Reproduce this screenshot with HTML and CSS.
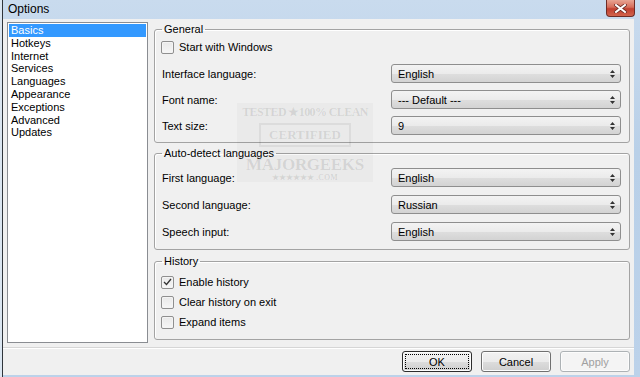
FILE: index.html
```html
<!DOCTYPE html>
<html lang="en">
<head>
  <meta charset="UTF-8">
  <title>Options</title>
  <link rel="stylesheet" href="styles.css">
</head>
<body>
  <div class="window">
    <div class="titlebar">
      <span class="title">Options</span>
      <span class="close" title="Close">
        <svg width="13" height="9" viewBox="0 0 13 9">
          <path d="M2 1 L11 8 M11 1 L2 8" stroke="#6b2a24" stroke-width="3.6" stroke-linecap="square"/>
          <path d="M2 1 L11 8 M11 1 L2 8" stroke="#ffffff" stroke-width="2" stroke-linecap="square"/>
        </svg>
      </span>
    </div>

    <div class="client">
      <div class="main">
        <ul class="pages">
          <li class="selected">Basics</li>
          <li>Hotkeys</li>
          <li>Internet</li>
          <li>Services</li>
          <li>Languages</li>
          <li>Appearance</li>
          <li>Exceptions</li>
          <li>Advanced</li>
          <li>Updates</li>
        </ul>

        <div class="panel">
          <fieldset class="group general">
            <legend>General</legend>
            <label class="check first"><span class="box"></span>Start with Windows</label>
            <div class="rows">
              <span>Interface language:</span>
              <div class="select"><span>English</span><svg class="spin" width="5" height="8" viewBox="0 0 5 8"><path d="M2.5 0 L5 3 H0 Z M0 5 H5 L2.5 8 Z" fill="#333"/></svg></div>
              <span>Font name:</span>
              <div class="select"><span>--- Default ---</span><svg class="spin" width="5" height="8" viewBox="0 0 5 8"><path d="M2.5 0 L5 3 H0 Z M0 5 H5 L2.5 8 Z" fill="#333"/></svg></div>
              <span>Text size:</span>
              <div class="select"><span>9</span><svg class="spin" width="5" height="8" viewBox="0 0 5 8"><path d="M2.5 0 L5 3 H0 Z M0 5 H5 L2.5 8 Z" fill="#333"/></svg></div>
            </div>
          </fieldset>

          <fieldset class="group detect">
            <legend>Auto-detect languages</legend>
            <div class="rows wide">
              <span>First language:</span>
              <div class="select"><span>English</span><svg class="spin" width="5" height="8" viewBox="0 0 5 8"><path d="M2.5 0 L5 3 H0 Z M0 5 H5 L2.5 8 Z" fill="#333"/></svg></div>
              <span>Second language:</span>
              <div class="select"><span>Russian</span><svg class="spin" width="5" height="8" viewBox="0 0 5 8"><path d="M2.5 0 L5 3 H0 Z M0 5 H5 L2.5 8 Z" fill="#333"/></svg></div>
              <span>Speech input:</span>
              <div class="select"><span>English</span><svg class="spin" width="5" height="8" viewBox="0 0 5 8"><path d="M2.5 0 L5 3 H0 Z M0 5 H5 L2.5 8 Z" fill="#333"/></svg></div>
            </div>
          </fieldset>

          <fieldset class="group history">
            <legend>History</legend>
            <div class="checks">
              <label class="check"><span class="box checked"><svg width="9" height="8" viewBox="0 0 9 8"><path d="M1 4 L3.5 6.5 L8 1" fill="none" stroke="#333" stroke-width="1.3"/></svg></span>Enable history</label>
              <label class="check"><span class="box"></span>Clear history on exit</label>
              <label class="check"><span class="box"></span>Expand items</label>
            </div>
          </fieldset>
        </div>
      </div>

      <div class="buttons">
        <button class="btn default">OK</button>
        <button class="btn">Cancel</button>
        <button class="btn" disabled>Apply</button>
      </div>
    </div>

    <div class="watermark" aria-hidden="true">
      <div class="wm-top">TESTED ★100% CLEAN</div>
      <div class="wm-mid">CERTIFIED</div>
      <div class="wm-big">MAJORGEEKS</div>
      <div class="wm-bottom">★★★★★★ .COM</div>
    </div>
  </div>
</body>
</html>
```

FILE: styles.css
```css
* {
  margin: 0;
  padding: 0;
  box-sizing: border-box;
}

body {
  width: 640px;
  height: 377px;
  overflow: hidden;
  background-color: #dbe6f1;
  font-family: "Liberation Sans", Arial, sans-serif;
  font-size: 11px;
  color: #000;
}

.window {
  position: relative;
  margin-left: 2px;
  height: 377px;
  border-left: 1px solid #30353b;
  background: linear-gradient(#c9dbee, #b9d0e8 40%, #bcd2ea);
  display: flex;
  flex-direction: column;
}

.titlebar {
  height: 19px;
  display: flex;
  justify-content: space-between;
  align-items: flex-start;
  padding-left: 5px;
}

.title {
  font-size: 12px;
  line-height: 18px;
}

.close {
  width: 29px;
  height: 17px;
  margin-right: 5px;
  border: 1px solid #6e2c26;
  border-top: none;
  border-radius: 0 0 4px 4px;
  background: linear-gradient(#e8a493, #d66d5a 45%, #c13f2f 55%, #d2644d);
  display: flex;
  align-items: center;
  justify-content: center;
}

.client {
  flex: 1;
  margin: 0 6px 2px 0;
  background-color: #f0f0f0;
  display: flex;
  flex-direction: column;
}

.main {
  height: 328px;
  display: flex;
  gap: 6px;
  padding: 3px 0 0 4px;
}

.pages {
  list-style: none;
  width: 141px;
  height: 321px;
  background-color: #fff;
  border: 1px solid #8a8d92;
  padding: 1px;
}

.pages li {
  height: 12.8px;
  line-height: 12.8px;
  padding-left: 2px;
}

.pages li.selected {
  background-color: #3399ff;
  color: #fff;
}

.panel {
  width: 476px;
  display: flex;
  flex-direction: column;
}

.group {
  border: 1px solid #a3a3a3;
  border-radius: 3px;
  padding: 0 8px 0 7px;
  box-shadow: inset 1px 1px 0 #fff;
}

.group legend {
  padding: 0 2px;
  line-height: 14px;
}

.general {
  height: 121px;
}

.detect {
  height: 104px;
  margin-top: 3px;
}

.history {
  height: 86px;
  margin-top: 4px;
}

.check {
  display: flex;
  align-items: center;
  gap: 5px;
  height: 14px;
  margin-left: -1px;
}

.check.first {
  margin-top: 4px;
}

.box {
  width: 13px;
  height: 13px;
  border: 1px solid #8f8f8f;
  border-radius: 2px;
  background: linear-gradient(#e9e9e9, #f6f6f6);
  box-shadow: inset 0 0 0 1px #f4f4f4;
  display: flex;
  align-items: center;
  justify-content: center;
}

.rows {
  display: grid;
  grid-template-columns: 229px 1fr;
  grid-auto-rows: 19px;
  row-gap: 7px;
  align-items: center;
  margin-top: 10px;
}

.rows.wide {
  row-gap: 8px;
  margin-top: 8px;
}

.select {
  height: 19px;
  border: 1px solid #8e8e8e;
  border-radius: 3px;
  background: linear-gradient(#f3f3f3, #ebebeb 50%, #dedede 51%, #d3d3d3);
  display: flex;
  align-items: center;
  justify-content: space-between;
  padding: 0 5px 0 6px;
}

.checks {
  margin-top: 4px;
}

.checks .check {
  height: 20px;
}

.buttons {
  flex: 1;
  border-top: 1px solid #d6d6d6;
  box-shadow: inset 0 1px 0 #fff;
  display: flex;
  justify-content: flex-end;
  gap: 9px;
  padding: 3px 4px 0 0;
}

.btn {
  width: 70px;
  height: 21px;
  font-family: inherit;
  font-size: 11px;
  color: #000;
  border: 1px solid #707070;
  border-radius: 3px;
  background: linear-gradient(#f2f2f2, #ebebeb 50%, #dddddd 51%, #cfcfcf);
  box-shadow: inset 0 0 0 1px #fcfcfc;
  position: relative;
}

.btn.default {
  border-color: #2d2d2d;
}

.btn.default::after {
  content: "";
  position: absolute;
  inset: 2px;
  border: 1px dotted #000;
}

.btn:disabled {
  color: #a0a0a0;
  border-color: #adb2b5;
  background: #f4f4f4;
}

/* faint certification stamp lying over the panel */
.watermark {
  position: absolute;
  left: 234px;
  top: 103px;
  width: 136px;
  height: 79px;
  background-color: rgba(0, 0, 0, 0.025);
  color: rgba(0, 0, 0, 0.1);
  font-family: "Liberation Serif", serif;
  font-weight: 700;
  text-align: center;
  white-space: nowrap;
}

.wm-top {
  font-size: 12px;
  line-height: 18px;
  letter-spacing: -0.6px;
}

.wm-mid {
  font-size: 13px;
  line-height: 20px;
  margin: 2px 22px 0;
  border: 2px solid rgba(0, 0, 0, 0.06);
}

.wm-big {
  font-size: 17px;
  line-height: 16px;
  margin-top: 10px;
  letter-spacing: -0.3px;
}

.wm-bottom {
  font-size: 8px;
  line-height: 10px;
}
```
